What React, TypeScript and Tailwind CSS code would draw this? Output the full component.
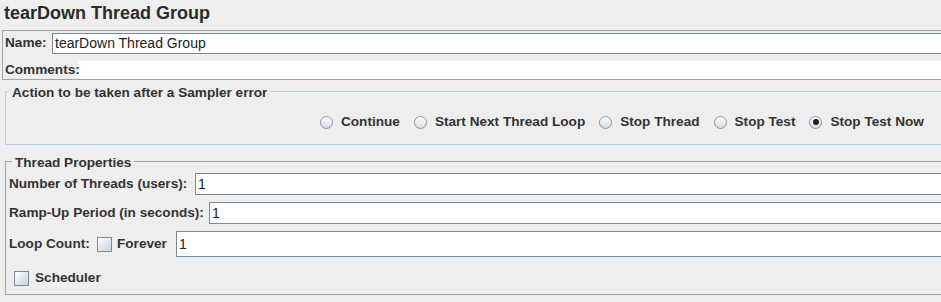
import clsx from 'clsx'

const Radio = ({ label, checked }: { label: string; checked?: boolean }) => (
  <label className="flex items-center gap-[8px]">
    <span className="flex h-[13px] w-[13px] shrink-0 items-center justify-center rounded-full border border-[#8a98a6] bg-linear-to-b from-white to-[#d3dbe4]">
      {checked && <span className="h-[6px] w-[6px] rounded-full bg-[#222222]" />}
    </span>
    <span className="whitespace-nowrap">{label}</span>
  </label>
)

const Checkbox = () => (
  <span className="h-[15px] w-[15px] shrink-0 border border-[#7d8c9b] bg-linear-to-br from-white to-[#c4d2e0]" />
)

const TextField = ({ value, className }: { value: string; className?: string }) => (
  <input
    readOnly
    defaultValue={value}
    className={clsx(
      'min-w-0 flex-1 border border-[#7a8a99] bg-white px-[2px] text-[14px] font-normal text-[#222222] outline-none',
      className
    )}
  />
)

export default function App() {
  return (
    <div className="h-[302px] w-[941px] overflow-hidden bg-[#eeeeee] font-['Liberation_Sans',Arial,sans-serif] text-[13.6px] font-bold text-[#333333]">
      <h1 className="h-[30px] pl-[4px] pt-[2px] text-[18px] leading-[22px] font-bold text-[#2b2b2b]">
        tearDown Thread Group
      </h1>

      <div className="ml-[2px] w-[960px] border border-[#a3a3a3]">
        <div className="flex items-center pt-[2px]">
          <span className="w-[49px] shrink-0 pl-[2px]">Name:</span>
          <TextField value="tearDown Thread Group" className="h-[21px]" />
        </div>
        <div className="mt-[7px] flex h-[18px] items-center">
          <span className="w-[76px] shrink-0 pl-[2px]">Comments:</span>
          <div className="h-full flex-1 bg-white" />
        </div>
      </div>

      <fieldset className="ml-[5px] mt-[3px] w-[950px] border border-[#b8cfe5]">
        <legend className="ml-[3px] px-[3px] pt-[3px] leading-[14px]">
          Action to be taken after a Sampler error
        </legend>
        <div className="flex h-[44px] items-center gap-[14px] pl-[314px] leading-[16px]">
          <Radio label="Continue" />
          <Radio label="Start Next Thread Loop" />
          <Radio label="Stop Thread" />
          <Radio label="Stop Test" />
          <Radio label="Stop Test Now" checked />
        </div>
      </fieldset>

      <fieldset className="ml-[5px] mt-[8px] w-[950px] border border-[#a5a5a5] pb-[8px]">
        <legend className="ml-[6px] px-[3px] pt-[3px] leading-[14px]">Thread Properties</legend>
        <div className="flex items-center pt-[3px]">
          <span className="w-[189px] shrink-0 pl-[3px]">Number of Threads (users):</span>
          <TextField value="1" className="h-[22px]" />
        </div>
        <div className="mt-[7px] flex items-center">
          <span className="w-[203px] shrink-0 pl-[3px]">Ramp-Up Period (in seconds):</span>
          <TextField value="1" className="h-[22px]" />
        </div>
        <div className="mt-[7px] flex items-center">
          <span className="w-[91px] shrink-0 pl-[3px]">Loop Count:</span>
          <Checkbox />
          <span className="w-[64px] shrink-0 pl-[5px]">Forever</span>
          <TextField value="1" className="h-[26px]" />
        </div>
        <div className="mt-[13px] flex h-[16px] items-center gap-[6px] pl-[8px]">
          <Checkbox />
          <span>Scheduler</span>
        </div>
      </fieldset>
    </div>
  )
}
